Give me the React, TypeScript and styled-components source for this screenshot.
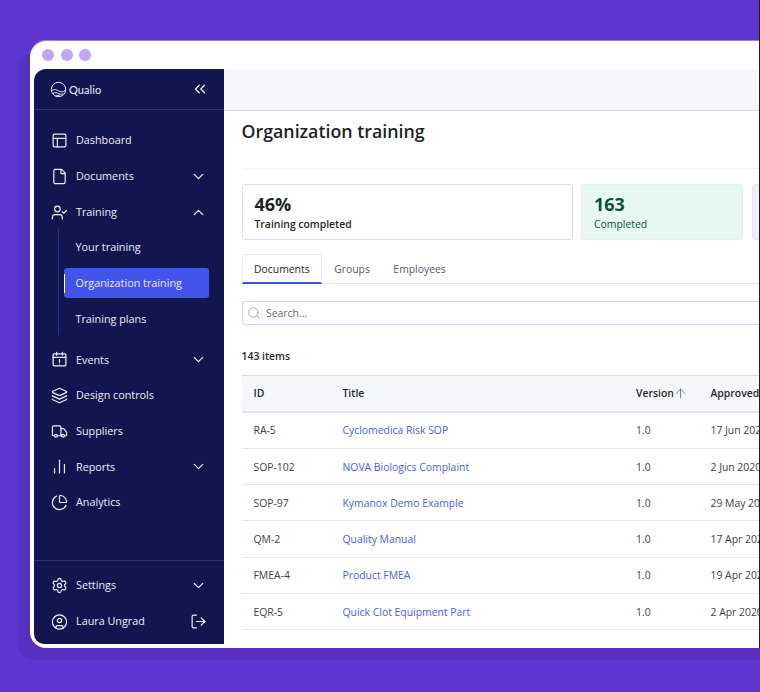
import React from "react";
import styled, { createGlobalStyle } from "styled-components";
import {
  ChevronDown, ChevronUp, ChevronsLeft, PanelsTopLeft, File, UserCheck, Layers, Truck,
  BarChart2, PieChart, Settings, CircleUser, LogOut, Search, ArrowUp,
} from "lucide-react";

const Global = createGlobalStyle`
  html, body { margin: 0; padding: 0; background: #5e35d0; }
  * { box-sizing: border-box; }
`;

const Page = styled.div`
  position: relative; width: 760px; height: 692px; overflow: hidden; background: #5e35d0;
  padding: 41px 0 0 30px; font-family: "Open Sans", "Noto Sans", sans-serif;
  &::after {
    content: ""; position: absolute; right: 0; top: 0; width: 1px; height: 648px; background: #1c1c22;
  }
`;
const Win = styled.div`
  width: 745px; height: 607px; background: #fff; border-radius: 16px 0 0 16px;
  overflow: hidden; display: flex; flex-direction: column; flex: none;
`;
const WinShadow = styled.div`
  width: 745px; border-radius: 16px 0 0 16px;
  box-shadow: -12px 12px 0 0 #5831c2, 0 -1px 0 0 #9a80e4;
`;
const TitleBar = styled.div`
  height: 28px; flex: none; padding: 8px 0 0 12px; display: flex; gap: 6.5px;
`;
const Dot = styled.span`
  width: 12px; height: 12px; border-radius: 50%; background: #c0a6f8;
`;
const Body = styled.div`
  flex: 1; display: flex; padding-left: 4px; min-height: 0;
`;
const Side = styled.aside`
  width: 190px; flex: none; background: #11174e; border-radius: 12px 0 0 10px; display: flex; flex-direction: column;
  color: #eceef7; margin-bottom: 4px;
`;
const Brand = styled.div`
  height: 41px; flex: none; padding: 0 15px 0 16px; display: flex; align-items: center; justify-content: space-between;
  border-bottom: 1px solid #2c3263;
`;
const BrandName = styled.div`
  display: flex; align-items: center; gap: 2px; font-family: "Lato", sans-serif; font-size: 11px; letter-spacing: .1px;
`;
const Nav = styled.nav`
  flex: 1; padding-top: 13px; display: flex; flex-direction: column;
`;
const Item = styled.div`
  height: 35.7px; flex: none; padding: 0 17.5px 0 17px; display: flex; align-items: center; gap: 8px;
  font-size: 10.8px; font-weight: 500; line-height: 1;
`;
const Label = styled.span`
  flex: 1; white-space: nowrap;
`;
const IconBox = styled.span`
  width: 17px; height: 17px; display: flex; align-items: center; justify-content: center; flex: none;
`;
const Sub = styled.div`
  margin-left: 23.5px; border-left: 1.5px solid #23329a; padding-left: 5px; display: flex; flex-direction: column; width: 152px;
  height: 106px; margin-top: -1px; margin-bottom: 7px;
`;
const SubItem = styled.div<{ $active?: boolean }>`
  flex: none; width: 145px; display: flex; align-items: center; padding-left: 12px; position: relative;
  font-size: 10.8px; font-weight: 500; border-radius: 3px; white-space: nowrap;
  background: ${(p) => (p.$active ? "#4254ea" : "transparent")};
  height: ${(p) => (p.$active ? "30px" : "35.5px")};
  margin: ${(p) => (p.$active ? "3px 0" : "0")};
  &::before {
    content: "";
    display: ${(p) => (p.$active ? "block" : "none")};
    position: absolute; left: 0; top: 6px; bottom: 5px; width: 1.5px; background: #fff;
  }
`;
const SideFoot = styled.div`
  height: 84px; flex: none; border-top: 1px solid #2c3263; padding-top: 7px;
`;
const Main = styled.main`
  flex: 1; min-width: 0; display: flex; flex-direction: column;
`;
const TopBar = styled.div`
  height: 42px; flex: none; background: #f5f6f9; border-bottom: 1px solid #dcdde4;
`;
const Content = styled.div`
  flex: 1; padding: 0 0 0 17.5px; min-width: 0; overflow: hidden;
`;
const Heading = styled.h1`
  margin: 0; height: 58px; padding-top: 7px; border-bottom: 1px solid #f0f1f3;
  font-size: 17.8px; line-height: 26px; font-weight: 600; color: #1d1f24; white-space: nowrap;
`;
const Stats = styled.div`
  display: flex; gap: 8.5px; margin-top: 15px; width: 560px;
`;
const Stat = styled.div<{ $tone: "plain" | "green" | "violet" }>`
  flex: none; height: 56px; border-radius: 3px; padding: 7px 12px 0;
  width: ${(p) => (p.$tone === "plain" ? "331px" : "162px")};
  background: ${(p) => (p.$tone === "plain" ? "#fff" : p.$tone === "green" ? "#e6f8f1" : "#eeeffd")};
  border: 1px solid ${(p) => (p.$tone === "plain" ? "#dcdde2" : p.$tone === "green" ? "#dcf3ea" : "#e2e4fa")};
  color: ${(p) => (p.$tone === "green" ? "#0e5138" : "#1d1f24")};
`;
const StatNum = styled.div`
  font-size: 18px; font-weight: 700; line-height: 24px;
`;
const StatText = styled.div<{ $strong?: boolean }>`
  margin-top: 1px; font-size: 10.4px; line-height: 14px; font-weight: ${(p) => (p.$strong ? 600 : 500)}; white-space: nowrap;
`;
const Tabs = styled.div`
  display: flex; margin-top: 14px; height: 30px; border-bottom: 1px solid #e4e5e8; font-size: 10.4px;
`;
const Tab = styled.div<{ $active?: boolean }>`
  height: 30px; padding: 0 11.5px 0 ${(p) => (p.$active ? "11.5px" : "12px")}; display: flex; align-items: center; white-space: nowrap;
  color: ${(p) => (p.$active ? "#24262c" : "#55585f")}; font-weight: 500;
  border: ${(p) => (p.$active ? "1px solid #eceded" : "none")}; border-bottom: ${(p) => (p.$active ? "2px solid #3f51e8" : "none")};
  border-radius: 3px 3px 0 0;
`;
const SearchBox = styled.div`
  margin-top: 17px; height: 24px; border: 1px solid #cfd3f7; border-right: none; border-radius: 3px 0 0 3px;
  display: flex; align-items: center; gap: 5.5px; padding-left: 4px; font-size: 10.4px; color: #676a72;
`;
const Count = styled.div`
  margin-top: 24px; height: 15px; font-size: 10.4px; line-height: 15px; font-weight: 600; color: #24262c;
`;
const Table = styled.div`
  margin-top: 11px; border-top: 1px solid #d8d9de;
`;
const Row = styled.div<{ $head?: boolean }>`
  display: grid; grid-template-columns: 89px 293.5px 74.5px 1fr; align-items: center; padding: 0 0 0 12px;
  height: ${(p) => (p.$head ? "36.7px" : "36.25px")}; font-size: 10.4px; white-space: nowrap; overflow: hidden;
  background: ${(p) => (p.$head ? "#f5f6f9" : "#fff")};
  border-bottom: ${(p) => (p.$head ? "2px solid #e3e4ea" : "1px solid #e4e5e9")};
  font-weight: ${(p) => (p.$head ? 600 : 400)};
  color: ${(p) => (p.$head ? "#24262c" : "#3d4047")};
`;
const TitleLink = styled.span`
  color: #4a5bea;
`;
const SortCell = styled.span`
  display: flex; align-items: center; gap: 0;
  & > svg { margin-left: -1px; }
`;

const ic = (I: React.ComponentType<any>, size = 17) => <IconBox><I size={size} strokeWidth={1.7} /></IconBox>;
const Down = () => <ChevronDown size={17} strokeWidth={1.8} />;

const rows = [
  ["RA-5", "Cyclomedica Risk SOP", "1.0", "17 Jun 2020"],
  ["SOP-102", "NOVA Biologics Complaint", "1.0", "2 Jun 2020"],
  ["SOP-97", "Kymanox Demo Example", "1.0", "29 May 2020"],
  ["QM-2", "Quality Manual", "1.0", "17 Apr 2020"],
  ["FMEA-4", "Product FMEA", "1.0", "19 Apr 2020"],
  ["EQR-5", "Quick Clot Equipment Part", "1.0", "2 Apr 2020"],
];

const Logo = () => (
  <svg width="17" height="17" viewBox="0 0 17 17" fill="none" stroke="#eceef7" strokeWidth="1">
    <circle cx="8.5" cy="8.5" r="7.2" />
    <path d="M1.4 9.8c3-2.2 5.6-.8 7.8.4 2 1 3.7 1 5.900-.7M2.800 12.400c2.400-1.400 4.400-.5 6.200.4 1.500.7 2.900.8 4.400-.1M5.600 14.800c1.500-.6 3-.2 4.500.4" />
  </svg>
);

const CalendarAlert = () => (
  <svg width="17" height="17" viewBox="0 0 24 24" fill="none" stroke="currentColor" strokeWidth="1.7" strokeLinecap="round" strokeLinejoin="round">
    <rect x="3" y="4" width="18" height="17" rx="1.5" />
    <path d="M3 9h18M8 2v4M16 2v4M12 12v4M12 18.5v.01" />
  </svg>
);

export default function App() {
  return (
    <Page>
      <Global />
      <WinShadow>
      <Win>
        <TitleBar><Dot /><Dot /><Dot /></TitleBar>
        <Body>
          <Side>
            <Brand>
              <BrandName><Logo />Qualio</BrandName>
              <ChevronsLeft size={18} strokeWidth={1.8} />
            </Brand>
            <Nav>
              <Item>{ic(PanelsTopLeft)}<Label>Dashboard</Label></Item>
              <Item>{ic(File)}<Label>Documents</Label><Down /></Item>
              <Item>{ic(UserCheck)}<Label>Training</Label><ChevronUp size={17} strokeWidth={1.8} /></Item>
              <Sub>
                <SubItem>Your training</SubItem>
                <SubItem $active>Organization training</SubItem>
                <SubItem>Training plans</SubItem>
              </Sub>
              <Item><IconBox><CalendarAlert /></IconBox><Label>Events</Label><Down /></Item>
              <Item>{ic(Layers)}<Label>Design controls</Label></Item>
              <Item>{ic(Truck)}<Label>Suppliers</Label></Item>
              <Item>{ic(BarChart2)}<Label>Reports</Label><Down /></Item>
              <Item>{ic(PieChart)}<Label>Analytics</Label></Item>
            </Nav>
            <SideFoot>
              <Item>{ic(Settings)}<Label>Settings</Label><Down /></Item>
              <Item>{ic(CircleUser, 18)}<Label>Laura Ungrad</Label><LogOut size={17} strokeWidth={1.7} /></Item>
            </SideFoot>
          </Side>
          <Main>
            <TopBar />
            <Content>
              <Heading>Organization training</Heading>
              <Stats>
                <Stat $tone="plain"><StatNum>46%</StatNum><StatText $strong>Training completed</StatText></Stat>
                <Stat $tone="green"><StatNum>163</StatNum><StatText>Completed</StatText></Stat>
                <Stat $tone="violet"><StatNum>&nbsp;</StatNum></Stat>
              </Stats>
              <Tabs>
                <Tab $active>Documents</Tab>
                <Tab>Groups</Tab>
                <Tab>Employees</Tab>
              </Tabs>
              <SearchBox><Search size={14} strokeWidth={1.3} color="#8a8d95" />Search...</SearchBox>
              <Count>143 items</Count>
              <Table>
                <Row $head>
                  <span>ID</span><span>Title</span>
                  <SortCell>Version<ArrowUp size={15} strokeWidth={1.3} color="#666" /></SortCell>
                  <span>Approved</span>
                </Row>
                {rows.map((r) => (
                  <Row key={r[0]}>
                    <span>{r[0]}</span><TitleLink>{r[1]}</TitleLink><span>{r[2]}</span><span>{r[3]}</span>
                  </Row>
                ))}
              </Table>
            </Content>
          </Main>
        </Body>
      </Win>
      </WinShadow>
    </Page>
  );
}
